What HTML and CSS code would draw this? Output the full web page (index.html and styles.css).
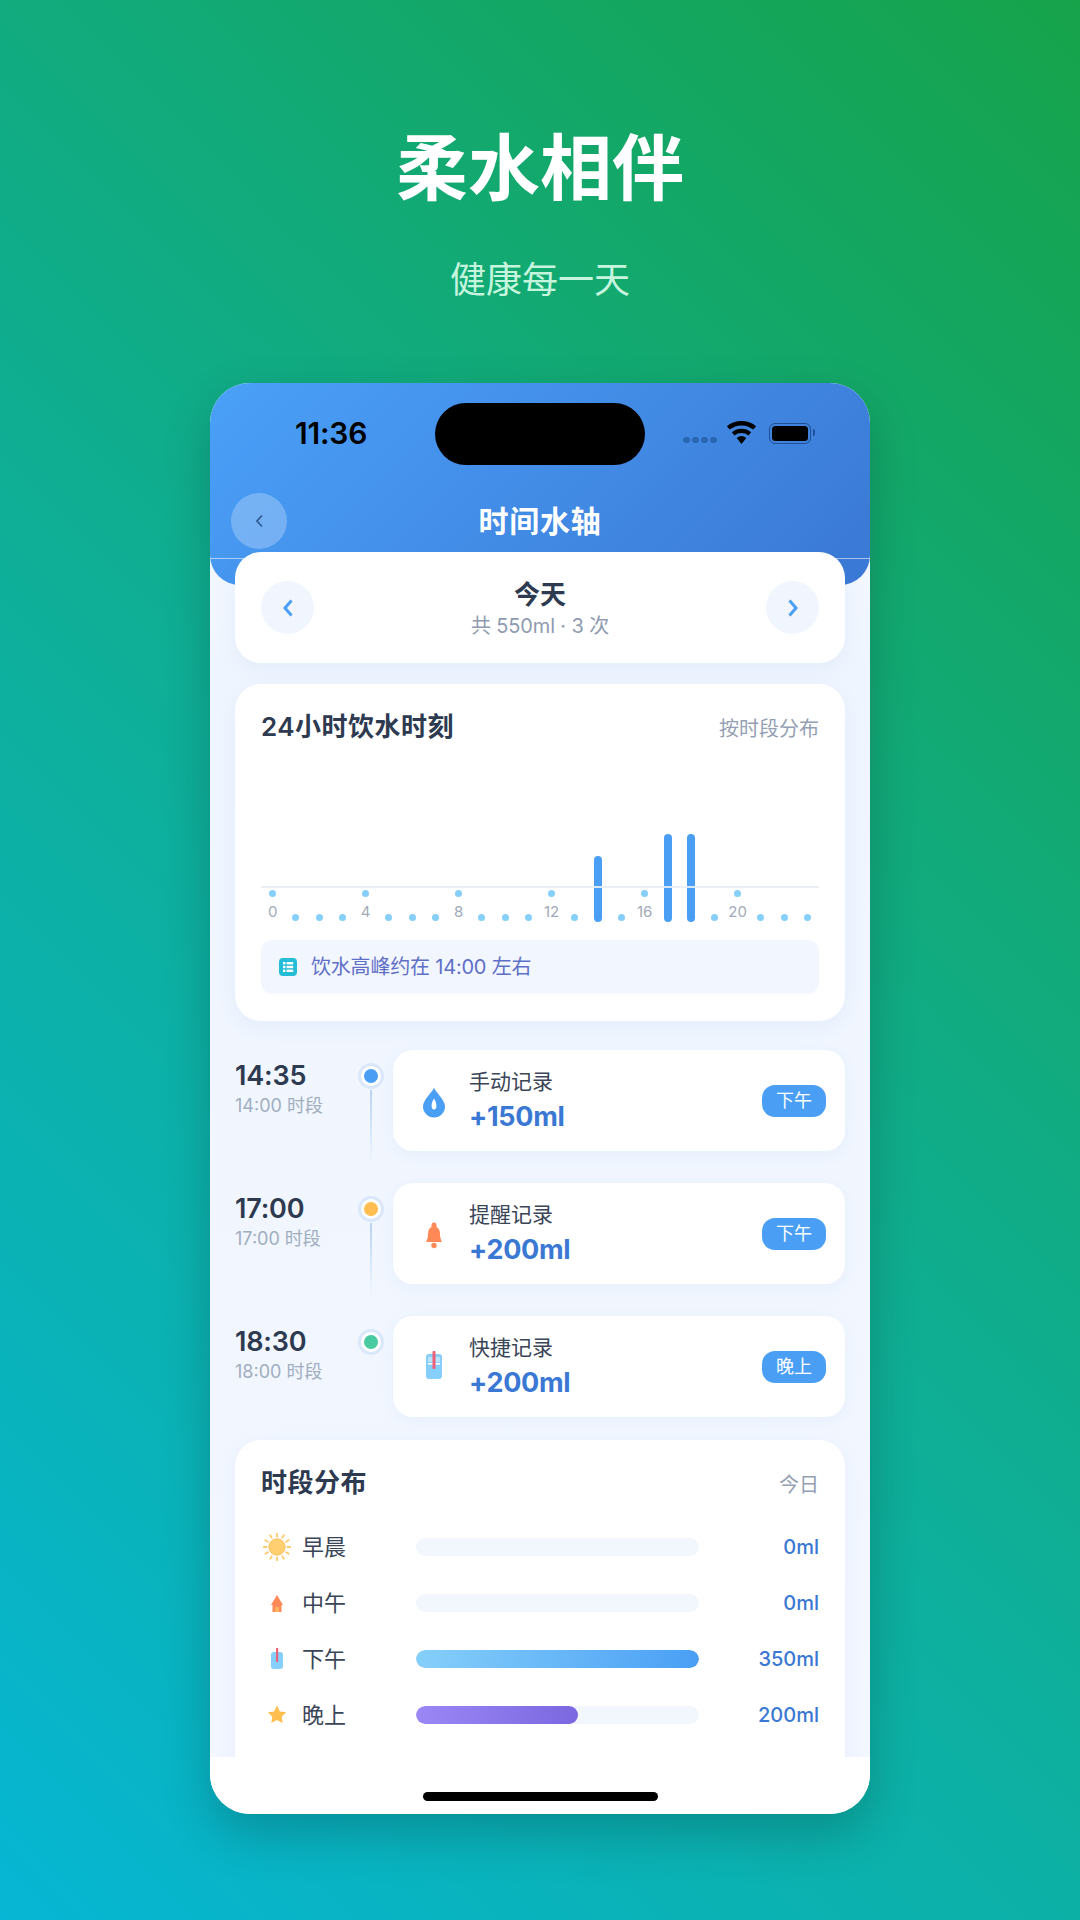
FILE: index.html
```html
<!DOCTYPE html>
<html lang="zh">
<head>
<meta charset="utf-8">
<title>柔水相伴</title>
<link rel="stylesheet" href="styles.css">
</head>
<body>
<main class="screen">
  <header class="hero">
    <h1 class="hero-title">柔水相伴</h1>
    <p class="hero-sub">健康每一天</p>
  </header>
  <section class="phone">
    <div class="app-head">
      <div class="status">
        <span class="clock">11:36</span>
        <span class="island"></span>
        <div class="status-right">
          <span class="signal"><i></i><i></i><i></i><i></i></span>
          <svg class="wifi" viewBox="0 0 30 22"><path d="M15 21 10.600 15.600a7 7 0 0 1 8.800 0Z"/><path d="M8.600 13.200 6.200 10.300a14 14 0 0 1 17.600 0l-2.400 2.900a10.200 10.200 0 0 0-12.800 0Z"/><path d="M4.200 7.900 1.600 4.800a21 21 0 0 1 26.800 0l-2.600 3.100a17 17 0 0 0-21.600 0Z"/></svg>
          <span class="battery"><i></i></span>
        </div>
      </div>
      <div class="nav">
        <span class="back"><svg viewBox="0 0 12 18"><path d="M9 3.500 4 9l5 5.500"/></svg></span>
        <span class="nav-title">时间水轴</span>
      </div>
    </div>
    <div class="content">
      <div class="card date-card">
        <span class="round"><svg viewBox="0 0 12 18"><path d="M9.500 1.500 3 9l6.500 7.500"/></svg></span>
        <div class="date-mid">
          <div class="date-day">今天</div>
          <div class="date-sum">共 550ml · 3 次</div>
        </div>
        <span class="round"><svg viewBox="0 0 12 18"><path d="M2.500 1.500 9 9l-6.500 7.500"/></svg></span>
      </div>

      <div class="card chart-card">
        <div class="card-top">
          <h2 class="card-title">24小时饮水时刻</h2>
          <span class="card-note">按时段分布</span>
        </div>
        <div class="chart">
          <span class="axis"></span>
          <div class="col"><i class="dot"></i><span class="hour">0</span></div>
          <div class="col"><i class="dot low"></i></div>
          <div class="col"><i class="dot low"></i></div>
          <div class="col"><i class="dot low"></i></div>
          <div class="col"><i class="dot"></i><span class="hour">4</span></div>
          <div class="col"><i class="dot low"></i></div>
          <div class="col"><i class="dot low"></i></div>
          <div class="col"><i class="dot low"></i></div>
          <div class="col"><i class="dot"></i><span class="hour">8</span></div>
          <div class="col"><i class="dot low"></i></div>
          <div class="col"><i class="dot low"></i></div>
          <div class="col"><i class="dot low"></i></div>
          <div class="col"><i class="dot"></i><span class="hour">12</span></div>
          <div class="col"><i class="dot low"></i></div>
          <div class="col"><i class="bar mid"></i></div>
          <div class="col"><i class="dot low"></i></div>
          <div class="col"><i class="dot"></i><span class="hour">16</span></div>
          <div class="col"><i class="bar tall"></i></div>
          <div class="col"><i class="bar tall"></i></div>
          <div class="col"><i class="dot low"></i></div>
          <div class="col"><i class="dot"></i><span class="hour">20</span></div>
          <div class="col"><i class="dot low"></i></div>
          <div class="col"><i class="dot low"></i></div>
          <div class="col"><i class="dot low"></i></div>
        </div>
        <div class="insight">
          <svg class="insight-icon" viewBox="0 0 18 18"><rect width="18" height="18" rx="4" fill="#25BCD6"/><rect x="4" y="4" width="2.400" height="2.400" fill="#fff"/><rect x="4" y="7.800" width="2.400" height="2.400" fill="#fff"/><rect x="4" y="11.600" width="2.400" height="2.400" fill="#fff"/><rect x="7.600" y="4" width="6.600" height="2.400" fill="#fff"/><rect x="7.600" y="7.800" width="6.600" height="2.400" fill="#fff"/><rect x="7.600" y="11.600" width="6.600" height="2.400" fill="#fff"/></svg>
          <span class="insight-text">饮水高峰约在 14:00 左右</span>
        </div>
      </div>

      <div class="timeline">
        <div class="event">
          <div class="event-time"><div class="time-big">14:35</div><div class="time-small">14:00 时段</div></div>
          <div class="rail"><i class="node blue"></i><i class="link"></i></div>
          <div class="event-card">
            <svg class="event-icon" viewBox="0 0 30 36"><path d="M15 4.500c1 4 11 12 11 19a11 11 0 0 1-22 0c0-7 10-15 11-19Z" fill="#4A9FF5"/><path d="M15 15.500c1.300 2 2.400 4.800 2.400 7.200a2.400 3.800 0 0 1-4.800 0c0-2.400 1.100-5.200 2.400-7.200Z" fill="#fff"/></svg>
            <div class="event-main"><div class="event-name">手动记录</div><div class="event-amt">+150ml</div></div>
            <span class="tag">下午</span>
          </div>
        </div>
        <div class="event">
          <div class="event-time"><div class="time-big">17:00</div><div class="time-small">17:00 时段</div></div>
          <div class="rail"><i class="node amber"></i><i class="link"></i></div>
          <div class="event-card">
            <svg class="event-icon" viewBox="0 0 30 36"><path d="M15 6.500a2.500 2.500 0 0 1 2.500 2.500v2c2.200 1 3.500 3.500 3.500 7 0 3 .6 5 2 8H7c1.400-3 2-5 2-8 0-3.500 1.300-6 3.500-7V9A2.500 2.500 0 0 1 15 6.500Z" fill="#FF8A57"/><circle cx="15" cy="29.500" r="2.700" fill="#FF8A57"/></svg>
            <div class="event-main"><div class="event-name">提醒记录</div><div class="event-amt">+200ml</div></div>
            <span class="tag">下午</span>
          </div>
        </div>
        <div class="event">
          <div class="event-time"><div class="time-big">18:30</div><div class="time-small">18:00 时段</div></div>
          <div class="rail"><i class="node green"></i></div>
          <div class="event-card">
            <svg class="event-icon" viewBox="0 0 30 36"><rect x="7" y="5" width="16" height="25" rx="3" fill="#85CFFA"/><path d="M9 8h12v5H9Z" fill="#B9E4FC"/><rect x="9" y="14" width="12" height="1.600" fill="#fff"/><rect x="13.500" y="2" width="3" height="18" rx="1" fill="#EC5F78"/></svg>
            <div class="event-main"><div class="event-name">快捷记录</div><div class="event-amt">+200ml</div></div>
            <span class="tag">晚上</span>
          </div>
        </div>
      </div>

      <div class="card dist-card">
        <div class="card-top">
          <h2 class="card-title">时段分布</h2>
          <span class="card-note">今日</span>
        </div>
        <div class="dist-row">
          <svg class="dist-icon" viewBox="0 0 28 28"><circle cx="14" cy="14" r="8.200" fill="#FFCF70" stroke="#F7B955" stroke-width=".8"/><path d="M14 3.500V.5M19.250 4.900l1.500-2.590M23.090 8.750l2.600-1.500M24.500 14h3M23.090 19.250l2.600 1.500M19.250 23.090l1.500 2.600M14 24.500v3M8.750 23.090l-1.500 2.600M4.910 19.250l-2.600 1.500M3.500 14h-3M4.910 8.750l-2.600-1.500M8.750 4.910l-1.500-2.600" stroke="#FFCB6B" stroke-width="1.800" stroke-linecap="round" fill="none"/></svg>
          <span class="dist-name">早晨</span>
          <div class="track"></div>
          <span class="dist-val">0ml</span>
        </div>
        <div class="dist-row">
          <svg class="dist-icon" viewBox="0 0 28 28"><path d="M14 6l6 10h-1.500v7h-9v-7H8Z" fill="#FF8A57"/><rect x="12" y="18" width="4" height="5" fill="#FFB45C"/></svg>
          <span class="dist-name">中午</span>
          <div class="track"></div>
          <span class="dist-val">0ml</span>
        </div>
        <div class="dist-row">
          <svg class="dist-icon" viewBox="0 0 28 28"><rect x="8" y="7" width="12" height="17" rx="3" fill="#85CFFA"/><rect x="13" y="3" width="2.200" height="14" fill="#E8637B"/></svg>
          <span class="dist-name">下午</span>
          <div class="track"><div class="fill sky" style="width:100%"></div></div>
          <span class="dist-val">350ml</span>
        </div>
        <div class="dist-row">
          <svg class="dist-icon" viewBox="0 0 28 28"><path d="M14 4.500l2.900 6 6.300.8-4.600 4.400 1.200 6.400-5.800-3.200-5.800 3.200 1.200-6.400-4.600-4.400 6.300-.8Z" fill="#FFBE4F"/></svg>
          <span class="dist-name">晚上</span>
          <div class="track"><div class="fill violet" style="width:57.140%"></div></div>
          <span class="dist-val">200ml</span>
        </div>
      </div>
    </div>
    <div class="home-bar"><span class="home-ind"></span></div>
  </section>
</main>
</body>
</html>
```

FILE: styles.css
```css
* { box-sizing: border-box; }
html, body { margin: 0; padding: 0; }
body {
  width: 1080px;
  height: 1920px;
  overflow: hidden;
  font-family: Inter, "Noto Sans CJK SC", sans-serif;
}
.screen {
  width: 1080px;
  height: 1920px;
  display: flex;
  flex-direction: column;
  align-items: center;
  background: linear-gradient(45deg, #06b6d4 0%, #0fae93 50%, #16a34a 100%);
}
.hero {
  height: 383px;
  padding-top: 120px;
  text-align: center;
  color: #fff;
}
.hero-title {
  margin: 0;
  font-size: 72px;
  line-height: 96px;
  font-weight: 700;
}
.hero-sub {
  margin: 40px 0 0;
  font-size: 36px;
  line-height: 48px;
  color: #c6f5de;
}
.phone {
  width: 660px;
  height: 1431px;
  border-radius: 40px;
  overflow: hidden;
  display: flex;
  flex-direction: column;
  background: linear-gradient(180deg, #f8fbff 0%, #eff5fe 20%, #f3f7ff 100%);
  box-shadow: 0 20px 50px rgba(0, 0, 0, .2);
}
.app-head {
  height: 202px;
  flex: none;
  border-radius: 0 0 30px 30px;
  background: linear-gradient(135deg, #4aa0f8 0%, #3a78d4 100%);
}
.status {
  height: 110px;
  padding: 20px 0 0;
  position: relative;
  display: flex;
  align-items: flex-start;
}
.clock {
  margin: 11px 0 0 85px;
  font-size: 30px;
  line-height: 38px;
  font-weight: 600;
  letter-spacing: -.2px;
  color: #000;
}
.island {
  width: 210px;
  height: 62px;
  margin-left: 68px;
  border-radius: 31px;
  background: #000;
}
.status-right {
  margin: 20px 0 0 38px;
  display: flex;
  align-items: center;
  height: 20px;
}
.signal { display: flex; gap: 2.500px; margin: 14px 8px 0 0; }
.signal i {
  width: 6.500px;
  height: 6.500px;
  border-radius: 50%;
  background: rgba(0, 40, 90, .35);
}
.wifi { width: 33px; height: 24px; flex: none; fill: #000; margin-right: 11px; }
.battery {
  width: 42px;
  height: 21px;
  padding: 2px;
  border: 1.500px solid #1f4f94;
  border-radius: 6px;
  position: relative;
}
.battery i { display: block; height: 100%; border-radius: 3.500px; background: #000; }
.battery::after {
  content: "";
  position: absolute;
  right: -5px;
  top: 5px;
  width: 2px;
  height: 7px;
  background: #1f4f94;
  border-radius: 0 2px 2px 0;
}
.nav {
  height: 66px;
  padding-left: 21px;
  position: relative;
  display: flex;
  align-items: flex-start;
  border-bottom: 1px solid rgba(255, 255, 255, .55);
}
.back {
  width: 56px;
  height: 56px;
  border-radius: 50%;
  background: rgba(255, 255, 255, .25);
  display: flex;
  align-items: center;
  justify-content: center;
}
.back svg {
  width: 12px;
  height: 18px;
  fill: none;
  stroke: #2f5c95;
  stroke-width: 1.800;
}
.nav-title {
  position: absolute;
  left: 0;
  right: 0;
  top: 8px;
  text-align: center;
  font-size: 30px;
  line-height: 40px;
  font-weight: 600;
  letter-spacing: .8px;
  color: #fff;
}
.content {
  flex: 1;
  min-height: 0;
  overflow: hidden;
  margin-top: -33px;
  padding: 0 25px;
  display: flex;
  flex-direction: column;
  position: relative;
}
.card {
  flex: none;
  background: #fff;
  border-radius: 26px;
  box-shadow: 0 6px 20px rgba(74, 130, 220, .07);
}
.date-card {
  height: 111px;
  padding: 0 26px;
  display: flex;
  align-items: center;
  justify-content: space-between;
}
.round {
  width: 53px;
  height: 53px;
  border-radius: 50%;
  background: #f1f6fe;
  display: flex;
  align-items: center;
  justify-content: center;
}
.round svg {
  width: 12px;
  height: 18px;
  fill: none;
  stroke: #4a9ff5;
  stroke-width: 3;
}
.date-mid { text-align: center; }
.date-day {
  font-size: 26px;
  line-height: 36px;
  font-weight: 600;
  color: #2d3a50;
}
.date-sum {
  font-size: 20px;
  line-height: 26px;
  letter-spacing: -.15px;
  color: #8f9bb0;
}
.chart-card {
  height: 337px;
  margin-top: 21px;
  padding: 26px;
}
.card-top {
  display: flex;
  align-items: center;
  justify-content: space-between;
  height: 34px;
}
.card-title {
  margin: 0;
  font-size: 26px;
  line-height: 34px;
  font-weight: 600;
  letter-spacing: .5px;
  color: #2d3a50;
}
.card-note {
  font-size: 20px;
  line-height: 28px;
  margin-top: 4px;
  color: #94a0b3;
}
.chart {
  height: 112px;
  margin-top: 66px;
  display: flex;
  align-items: flex-end;
  position: relative;
}
.axis {
  position: absolute;
  left: 0;
  right: 0;
  top: 76px;
  height: 2px;
  background: rgba(232, 238, 245, .9);
  z-index: 1;
}
.col {
  flex: 1;
  display: flex;
  flex-direction: column;
  align-items: center;
}
.dot {
  width: 7px;
  height: 7px;
  border-radius: 50%;
  background: #85cff8;
}
.dot.low { margin-bottom: 1px; }
.hour {
  margin-top: 5px;
  font-size: 15px;
  line-height: 20px;
  color: #a0aab8;
}
.bar {
  width: 8px;
  border-radius: 4px;
  background: #4a9ff5;
}
.bar.mid { height: 66px; }
.bar.tall { height: 88px; }
.insight {
  height: 54px;
  margin-top: 18px;
  padding: 0 18px;
  border-radius: 12px;
  background: #f2f6fe;
  display: flex;
  align-items: center;
  gap: 14px;
}
.insight-icon { width: 18px; height: 18px; flex: none; }
.insight-text {
  font-size: 20px;
  line-height: 28px;
  letter-spacing: -.2px;
  color: #5f6fc7;
}
.timeline {
  flex: none;
  margin-top: 29px;
  display: flex;
  flex-direction: column;
  gap: 32px;
}
.event {
  display: flex;
  height: 101px;
}
.event-time { width: 123px; flex: none; padding-top: 9px; }
.time-big {
  font-size: 27px;
  line-height: 34px;
  font-weight: 600;
  letter-spacing: -.2px;
  color: #2d3a50;
}
.time-small {
  margin-top: 1px;
  font-size: 18px;
  line-height: 24px;
  color: #a0aec0;
}
.rail {
  width: 26px;
  flex: none;
  display: flex;
  flex-direction: column;
  align-items: center;
  padding-top: 16px;
}
.node {
  width: 20px;
  height: 20px;
  flex: none;
  border-radius: 50%;
  border: 3px solid #fff;
  box-shadow: 0 0 0 3px #dbe8fb;
}
.node.blue { background: #4a9ff5; }
.node.amber { background: #ffbe4f; }
.node.green { background: #48cba0; }
.link {
  width: 2px;
  height: 73px;
  margin-top: 4px;
  flex: none;
  background: linear-gradient(180deg, #b6d4f5, rgba(182, 212, 245, 0));
}
.event-card {
  flex: 1;
  margin-left: 9px;
  padding: 0 19px 0 26px;
  display: flex;
  align-items: center;
  background: #fff;
  border-radius: 20px;
  box-shadow: 0 4px 16px rgba(74, 130, 220, .06);
}
.event-icon { width: 30px; height: 36px; flex: none; }
.event-main { flex: 1; margin-left: 20px; }
.event-name {
  font-size: 21px;
  line-height: 30px;
  color: #3a4557;
}
.event-amt {
  margin-top: 2px;
  font-size: 27px;
  line-height: 36px;
  font-weight: 700;
  letter-spacing: -.3px;
  color: #3a78d4;
}
.tag {
  width: 64px;
  height: 32px;
  border-radius: 13px;
  background: #4a9ff5;
  color: #fff;
  font-size: 18px;
  line-height: 32px;
  text-align: center;
}
.dist-card {
  margin-top: 23px;
  padding: 26px 26px 80px;
}
.dist-card .card-top { margin-bottom: 19px; }
.dist-row {
  height: 56px;
  display: flex;
  align-items: center;
}
.dist-icon { width: 28px; height: 28px; flex: none; margin-left: 2px; }
.dist-name {
  width: 114px;
  flex: none;
  margin-left: 11px;
  font-size: 22px;
  line-height: 30px;
  color: #3a4557;
}
.track {
  width: 283px;
  height: 18px;
  flex: none;
  border-radius: 9px;
  background: #f2f6fd;
  overflow: hidden;
}
.fill { height: 100%; border-radius: 9px; }
.fill.sky { background: linear-gradient(90deg, #85cffa, #4a9ff5); }
.fill.violet { background: linear-gradient(90deg, #9b87f5, #7b68e0); }
.dist-val {
  flex: 1;
  text-align: right;
  font-size: 20px;
  line-height: 28px;
  font-weight: 500;
  color: #3a78d4;
}
.home-bar {
  height: 57px;
  flex: none;
  position: relative;
  z-index: 2;
  padding-top: 35px;
  background: #fff;
  display: flex;
  justify-content: center;
  align-items: flex-start;
}
.home-ind {
  width: 235px;
  height: 9px;
  border-radius: 5px;
  background: #000;
}
```
